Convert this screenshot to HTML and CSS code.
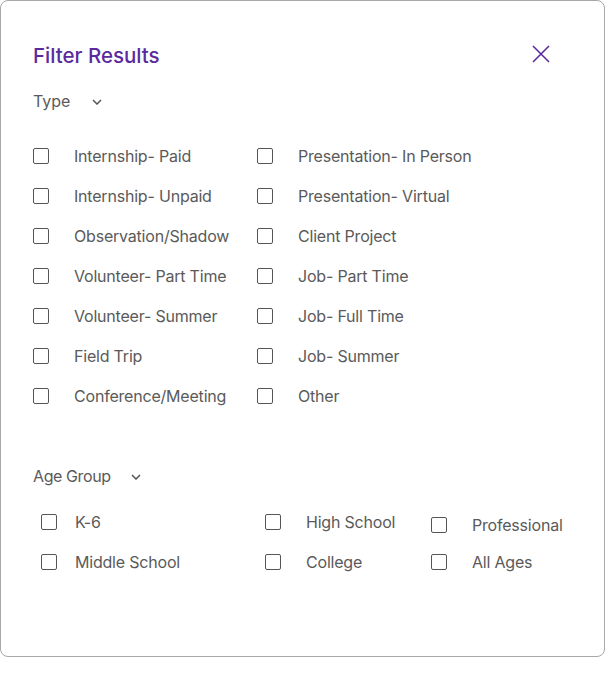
FILE: index.html
```html
<!DOCTYPE html>
<html>
<head>
<meta charset="utf-8">
<link rel="stylesheet" href="styles.css">
</head>
<body>
<div class="card">
  <div class="header">
    <h1 class="title">Filter Results</h1>
    <svg class="close" width="18" height="18" viewBox="0 0 18 18"><path d="M1 1 L17 17 M17 1 L1 17" stroke="#5b2a9e" stroke-width="1.6" fill="none"/></svg>
  </div>
  <div class="section-head type-head">
    <span>Type</span>
    <svg class="chev" width="10" height="6" viewBox="0 0 10 6"><path d="M1 1 L5 5 L9 1" stroke="#555" stroke-width="1.5" fill="none"/></svg>
  </div>
  <div class="type-grid">
    <label class="opt"><span class="box"></span>Internship- Paid</label>
    <label class="opt"><span class="box"></span>Presentation- In Person</label>
    <label class="opt"><span class="box"></span>Internship- Unpaid</label>
    <label class="opt"><span class="box"></span>Presentation- Virtual</label>
    <label class="opt"><span class="box"></span>Observation/Shadow</label>
    <label class="opt"><span class="box"></span>Client Project</label>
    <label class="opt"><span class="box"></span>Volunteer- Part Time</label>
    <label class="opt"><span class="box"></span>Job- Part Time</label>
    <label class="opt"><span class="box"></span>Volunteer- Summer</label>
    <label class="opt"><span class="box"></span>Job- Full Time</label>
    <label class="opt"><span class="box"></span>Field Trip</label>
    <label class="opt"><span class="box"></span>Job- Summer</label>
    <label class="opt"><span class="box"></span>Conference/Meeting</label>
    <label class="opt"><span class="box"></span>Other</label>
  </div>
  <div class="section-head age-head">
    <span class="age-label">Age Group</span>
    <svg class="chev" width="10" height="6" viewBox="0 0 10 6"><path d="M1 1 L5 5 L9 1" stroke="#555" stroke-width="1.5" fill="none"/></svg>
  </div>
  <div class="age-grid">
    <div class="age-col c1">
      <label class="opt"><span class="box"></span>K-6</label>
      <label class="opt"><span class="box"></span>Middle School</label>
    </div>
    <div class="age-col c2">
      <label class="opt"><span class="box"></span>High School</label>
      <label class="opt"><span class="box"></span>College</label>
    </div>
    <div class="age-col c3">
      <label class="opt prof"><span class="box"></span>Professional</label>
      <label class="opt"><span class="box"></span>All Ages</label>
    </div>
  </div>
</div>
</body>
</html>
```
FILE: styles.css
```css
* { box-sizing: border-box; }
html, body { margin: 0; padding: 0; background: #fff; }
body { font-family: Inter, "Noto Sans", sans-serif; color: #5a5a5a; }
.card {
  width: 605px;
  height: 657px;
  border: 1px solid #a8a8a8;
  border-radius: 8px;
  padding: 43px 54px 0 32px;
}
.header { display: flex; justify-content: space-between; align-items: center; height: 24px; }
.title { margin: 0; font-size: 20.5px; font-weight: 500; color: #5b2a9e; line-height: 24px; }
.close { margin-top: -4px; }
.section-head { display: flex; align-items: center; font-size: 16px; line-height: 20px; color: #5a5a5a; }
.type-head { margin-top: 23px; gap: 22px; }
.age-head { margin-top: 50px; gap: 20px; }
.age-label { letter-spacing: -0.4px; }
.chev { margin-top: 1px; }
.type-grid { display: grid; grid-template-columns: 224px 1fr; margin-top: 25px; }
.opt { display: flex; align-items: center; height: 40px; font-size: 16px; color: #5a5a5a; letter-spacing: -0.2px; white-space: nowrap; }
.box { width: 16px; height: 16px; border: 1px solid #555; border-radius: 2px; margin-right: 25px; flex: none; }
.age-grid { display: flex; margin-top: 16px; }
.age-col { display: flex; flex-direction: column; flex: none; }
.c1 { margin-left: 8px; width: 224px; }
.c1 .box { margin-right: 18px; }
.c2 { width: 166px; }
.prof { padding-top: 5px; }
```
